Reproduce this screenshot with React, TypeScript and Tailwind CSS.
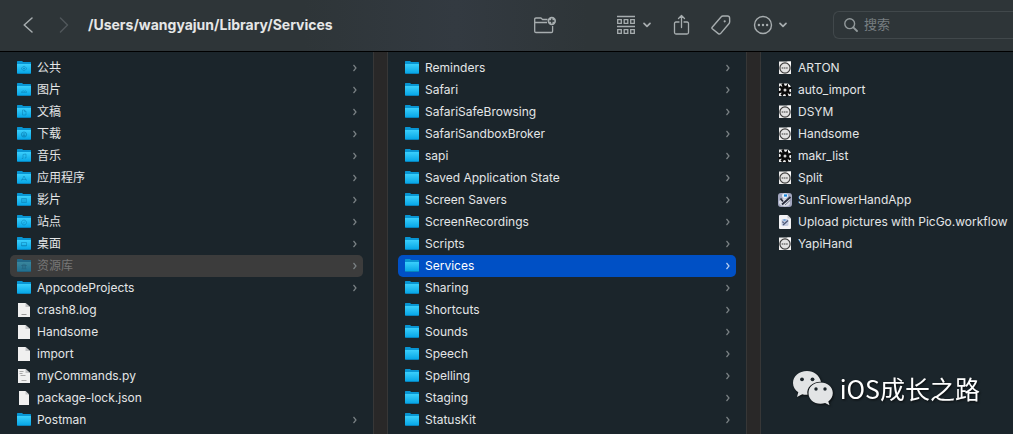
import React from "react";

type Kind =
  | "folder" | "public" | "pictures" | "documents" | "downloads" | "music" | "apps" | "movies" | "sites"
  | "desktop" | "library" | "file" | "log" | "script" | "json" | "service" | "gear" | "automator" | "workflow";

type Item = { name: string; kind: Kind };

const home: Item[] = [
  { name: "公共", kind: "public" },
  { name: "图片", kind: "pictures" },
  { name: "文稿", kind: "documents" },
  { name: "下载", kind: "downloads" },
  { name: "音乐", kind: "music" },
  { name: "应用程序", kind: "apps" },
  { name: "影片", kind: "movies" },
  { name: "站点", kind: "sites" },
  { name: "桌面", kind: "desktop" },
  { name: "资源库", kind: "library" },
  { name: "AppcodeProjects", kind: "folder" },
  { name: "crash8.log", kind: "log" },
  { name: "Handsome", kind: "file" },
  { name: "import", kind: "file" },
  { name: "myCommands.py", kind: "script" },
  { name: "package-lock.json", kind: "json" },
  { name: "Postman", kind: "folder" },
];

const library: Item[] = [
  "Reminders", "Safari", "SafariSafeBrowsing", "SafariSandboxBroker", "sapi", "Saved Application State",
  "Screen Savers", "ScreenRecordings", "Scripts", "Services", "Sharing", "Shortcuts", "Sounds", "Speech",
  "Spelling", "Staging", "StatusKit",
].map((name) => ({ name, kind: "folder" }));

const services: Item[] = [
  { name: "ARTON", kind: "service" },
  { name: "auto_import", kind: "gear" },
  { name: "DSYM", kind: "service" },
  { name: "Handsome", kind: "service" },
  { name: "makr_list", kind: "gear" },
  { name: "Split", kind: "service" },
  { name: "SunFlowerHandApp", kind: "automator" },
  { name: "Upload pictures with PicGo.workflow", kind: "workflow" },
  { name: "YapiHand", kind: "service" },
];

const leafKinds: Kind[] = ["file", "log", "script", "json", "service", "gear", "automator", "workflow"];

const glyphs: Partial<Record<Kind, React.ReactNode>> = {
  public: <path d="M8 6l3 2.500L8 11 5 8.500zM8 7.500v2M7 8.500h2" />,
  pictures: <path d="M5.500 9.800l1.700-1 1.300.6 1-.6 1 .8v.8h-5z" />,
  documents: <path d="M6.500 6h2l1.500 1.500V11H6.500zM8.500 6v1.500H10" />,
  downloads: <path d="M8 6a2.500 2.500 0 1 0 .01 0M8 7v3M7 9l1 1 1-1" strokeWidth="1.200" />,
  music: <path d="M7 10.500V6.500l3-.5v4M7 10.500H5.800M10 10H8.800" />,
  apps: <path d="M8 6l-2.500 4.800M8 6l2.500 4.800M5.500 9.500h5" />,
  movies: <path d="M5.500 6.500h5v4h-5zM7 6.500v4M9 6.500v4" />,
  sites: <path d="M8 6a2.500 2.500 0 1 0 .01 0M7 9.500l2-2" />,
  desktop: <path d="M5.500 6.500h5v3.500h-5zM5.500 9.500h5" />,
  library: <path d="M5.500 7.500L8 6l2.500 1.500zM6.500 7.500v3M8 7.500v3M9.500 7.500v3M5.500 10.800h5" />,
};

function FolderIcon({ kind }: { kind: Kind }) {
  return (
    <svg viewBox="0 0 16 16" className={kind === "library" ? "size-4 shrink-0 opacity-50" : "size-4 shrink-0"} aria-hidden="true">
      <defs>
        <linearGradient id="folderFront" x1="0" y1="0" x2="0" y2="1">
          <stop offset="0" stopColor="#3acffc" />
          <stop offset="1" stopColor="#06a5e6" />
        </linearGradient>
      </defs>
      <path d="M1 1.600Q1 1 1.600 1H6l1.200 1H14.400Q15 2 15 2.600V13H1z" fill="#0895d3" />
      <path d="M1 4h14V12.500q0 1-1 1H2q-1 0-1-1z" fill="url(#folderFront)" />
      <path d="M1 12.900h14q0 1.100-1 1.100H2q-1 0-1-1.100z" fill="#0784bd" />
      <g fill="none" stroke="#0878ad" strokeWidth="0.800" opacity="0.6">{glyphs[kind]}</g>
    </svg>
  );
}

function LeafIcon({ kind }: { kind: Kind }) {
  if (kind === "service") {
    return (
      <svg viewBox="0 0 16 16" className="size-4 shrink-0" aria-hidden="true">
        <path d="M2 1.500h12v12.500H2z" fill="#efefef" />
        <circle cx="8" cy="8" r="5.100" fill="#e2e2e2" stroke="#3c3c3c" strokeWidth="1.200" />
        <path d="M10 1.500h4V5.500z" fill="#ffffff" />
        <path d="M4.700 8h6.600" stroke="#8f8f8f" strokeWidth="2" strokeDasharray="1.600 .6" />
      </svg>
    );
  }
  if (kind === "gear") {
    return (
      <svg viewBox="0 0 16 16" className="size-4 shrink-0" aria-hidden="true">
        <path d="M2 1.500h8.500L14 5v9H2z" fill="#f0f0f0" />
        <g stroke="#0a0a0a" strokeWidth="2.400">
          <path d="M5.500 1.500l5 13M14.500 5.500l-13 5M2.500 4.500l11 7M11.500 2.500l-7 11" />
        </g>
        <circle cx="8" cy="8" r="4.300" fill="#0a0a0a" />
        <circle cx="8" cy="8" r="1.500" fill="#d0d0d0" />
        <path d="M11 1.500L14 4.500H11z" fill="#ffffff" />
      </svg>
    );
  }
  if (kind === "automator") {
    return (
      <svg viewBox="0 0 16 16" className="size-4 shrink-0" aria-hidden="true">
        <rect x="1" y="1" width="14" height="14" rx="3" fill="#a3a7c0" />
        <path d="M2 9l5-3 6 1v4q0 3-5 3.500Q3 14 2 11z" fill="#d9dce6" />
        <rect x="5" y="1.500" width="6" height="4.500" rx="2" fill="#e5edf8" />
        <path d="M7 3.500h3" stroke="#1686de" strokeWidth="2.200" />
        <path d="M3.500 6.500l2.500 3M5 12.500L13.500 5" stroke="#292d3c" strokeWidth="1.800" fill="none" />
        <path d="M8 13l5.500-5" stroke="#707588" strokeWidth="1" />
      </svg>
    );
  }
  if (kind === "workflow") {
    return (
      <svg viewBox="0 0 16 16" className="size-4 shrink-0" aria-hidden="true">
        <path d="M2 2q0-1 1-1h7.500L14 4.500V14q0 1-1 1H3q-1 0-1-1z" fill="#f2f2f5" />
        <path d="M10.500 1v3.500H14z" fill="#c9cad0" />
        <rect x="4.500" y="5" width="7" height="7" rx="1.500" fill="#c3cbe0" />
        <path d="M5.500 7.500l1 1.500M6 11l5-4.500" stroke="#4c5674" strokeWidth="1.300" fill="none" />
        <path d="M6.500 6h2" stroke="#4a97da" strokeWidth="1.300" />
      </svg>
    );
  }
  return (
    <svg viewBox="0 0 16 16" className="size-4 shrink-0" aria-hidden="true">
      <path d={kind === "json" ? "M3 1h6.500L13 4.500V15H3z" : "M2 1h7.500L14 5v10H2z"} fill="#f0f0f0" />
      <path d={kind === "json" ? "M9.500 1v3.500H13z" : "M9.500 1v4H14z"} fill="#c4c5c7" />
      {kind === "log" && <path d="M5.500 12.500h5" stroke="#999" strokeWidth="1" />}
      {kind === "script" && <path d="M3.500 3.500h4M3.500 5.500h3M4.500 7.500h5M5.500 12.500h5" stroke="#aaa" strokeWidth="1" />}
    </svg>
  );
}

function Row({ item, state }: { item: Item; state?: "active" | "trail" }) {
  const leaf = leafKinds.includes(item.kind);
  const tone =
    state === "active" ? "bg-[#0050c5] text-white" : state === "trail" ? "bg-[#3c3c3c] text-[#777777]" : "text-[#e4e6e7]";
  const arrow = state === "active" ? "text-[#b8cff0]" : "text-[#7b8285]";
  return (
    <li>
      <button type="button" className={`flex h-[22px] w-full items-center rounded-[5px] pr-[5px] pl-1.5 text-left text-[12px] ${tone}`}>
        {leaf ? <LeafIcon kind={item.kind} /> : <FolderIcon kind={item.kind} />}
        <span className="ml-[5px] flex-1 whitespace-nowrap">{item.name}</span>
        {!leaf && (
          <svg viewBox="0 0 6 8" className={`h-2 w-1.5 shrink-0 ${arrow}`} fill="none" stroke="currentColor" strokeWidth="1.200" aria-hidden="true">
            <path d="M1.500 1l2.500 3-2.500 3" />
          </svg>
        )}
      </button>
    </li>
  );
}

function Column({ items, label, selected, state }: { items: Item[]; label: string; selected?: string; state?: "active" | "trail" }) {
  return (
    <ul aria-label={label} className="min-w-0 px-2.5 pt-[5px] pb-[3px]">
      {items.map((item) => (
        <Row key={item.name} item={item} state={item.name === selected ? state : undefined} />
      ))}
    </ul>
  );
}

function Divider() {
  return <div className="border-x border-[#373737] bg-[#292828]" />;
}

function DownArrow() {
  return (
    <svg viewBox="0 0 8 6" className="h-1.5 w-2" fill="none" stroke="currentColor" strokeWidth="1.700" strokeLinecap="round" strokeLinejoin="round" aria-hidden="true">
      <path d="M1 1.300l3 3 3-3" />
    </svg>
  );
}

function Toolbar() {
  return (
    <header className="flex h-[52px] items-center border-b border-black bg-[#2e3538] bg-[linear-gradient(90deg,#2e3538_30%,#333a41_45%,#2e3538_58%)] pb-0.5 text-[#a7adaf]">
      <button type="button" aria-label="Back" className="ml-5 flex h-7 w-4 items-center justify-center">
        <svg viewBox="0 0 10 16" className="h-4 w-2.5" fill="none" stroke="currentColor" strokeWidth="1.500" strokeLinecap="round" strokeLinejoin="round"><path d="M9 1L1.200 8 9 15" /></svg>
      </button>
      <button type="button" aria-label="Forward" className="ml-5 flex h-7 w-4 items-center justify-center text-[#50575a]">
        <svg viewBox="0 0 10 16" className="h-4 w-2.5" fill="none" stroke="currentColor" strokeWidth="1.500" strokeLinecap="round" strokeLinejoin="round"><path d="M1.500 1l7 7-7 7" /></svg>
      </button>
      <h1 className="ml-4 min-w-0 flex-1 whitespace-nowrap text-[14px] leading-5 font-bold text-[#e6e7e7]">/Users/wangyajun/Library/Services</h1>
      <button type="button" aria-label="New folder">
        <svg viewBox="0 0 24 20" className="h-5 w-6" fill="none" stroke="currentColor" strokeWidth="1.300" strokeLinejoin="round">
          <path d="M14.500 4.500H9.500L8 3H3Q1.700 3 1.700 4.300V16.200Q1.700 17.500 3 17.500H18.300Q19.600 17.500 19.600 16.200V11M1.700 7.500H14" />
          <circle cx="18.800" cy="6" r="4.200" fill="currentColor" stroke="none" />
          <path d="M18.800 3.500v5M16.300 6h5" stroke="#2e3538" />
        </svg>
      </button>
      <button type="button" aria-label="Group items" className="ml-[60px] flex items-center gap-2">
        <svg viewBox="0 0 18 20" className="h-5 w-[18px]" fill="none" stroke="currentColor" strokeWidth="1.300">
          <path d="M0 1.500h18M0 11.500h18" />
          <path d="M.7 4.700h3.600v3.600H.7zM7.200 4.700h3.600v3.600H7.200zM13.700 4.700h3.600v3.600h-3.600zM.7 14.700h3.600v3.600H.7zM7.200 14.700h3.600v3.600H7.200zM13.700 14.700h3.600v3.600h-3.600z" />
        </svg>
        <DownArrow />
      </button>
      <button type="button" aria-label="Share" className="ml-[22px]">
        <svg viewBox="0 0 18 22" className="h-[22px] w-[18px]" fill="none" stroke="currentColor" strokeWidth="1.300" strokeLinecap="round" strokeLinejoin="round">
          <path d="M6 8H3Q1.500 8 1.500 9.500V18.500Q1.500 20 3 20H14Q15.500 20 15.500 18.500V9.500Q15.500 8 14 8H11M8.500 13.500V1.500M5.500 4.500l3-3 3 3" />
        </svg>
      </button>
      <button type="button" aria-label="Tags" className="ml-5">
        <svg viewBox="0 0 20 20" className="size-5" fill="none" stroke="currentColor" strokeWidth="1.400" strokeLinejoin="round">
          <path d="M1.200 12.200L10 2Q10.800 1 12 1H16.500Q18.500 1 18.600 3L18.700 6.500Q18.700 8 17.700 9L9.500 18.600Q8.500 19.600 7.300 18.600L1.300 13.700Q.6 13 1.200 12.200z" />
          <circle cx="13.700" cy="6.300" r="1.100" fill="currentColor" stroke="none" />
        </svg>
      </button>
      <button type="button" aria-label="More" className="ml-[22px] flex items-center gap-1.5">
        <svg viewBox="0 0 20 20" className="size-5" fill="none" stroke="currentColor" strokeWidth="1.400">
          <circle cx="10" cy="10" r="8.500" />
          <g fill="currentColor" stroke="none"><circle cx="5.900" cy="10" r="1.200" /><circle cx="10" cy="10" r="1.200" /><circle cx="14.100" cy="10" r="1.200" /></g>
        </svg>
        <DownArrow />
      </button>
      <label className="ml-[46px] flex h-7 w-[180px] items-center gap-1.5 rounded-l-md border border-r-0 border-[#41484b] pl-2.5">
        <svg viewBox="0 0 14 14" className="size-3.5 shrink-0 text-[#92999b]" fill="none" stroke="currentColor" strokeWidth="1.400" strokeLinecap="round" aria-hidden="true">
          <circle cx="5.700" cy="5.700" r="4.900" /><path d="M9.300 9.300l3.700 3.700" strokeWidth="1.800" />
        </svg>
        <input type="search" aria-label="搜索" placeholder="搜索" className="w-full min-w-0 bg-transparent text-[13px] outline-none placeholder:text-[#777e81]" />
      </label>
    </header>
  );
}

function Watermark() {
  return (
    <div className="absolute right-[33px] bottom-7 flex items-center gap-1.5 [filter:drop-shadow(1px_1px_1px_rgba(0,0,0,0.7))]">
      <svg viewBox="0 0 42 36" className="h-9 w-[42px]" aria-hidden="true">
        <path d="M15 1C7 1 1 6.300 1 13c0 3.900 2 7.200 5.300 9.300L5 27l5.200-2.800c1.500.4 3.200.7 5.300.6C14 17 21 11.500 29 11.700 27.500 5.500 22 1 15 1z" fill="#e2e4e5" />
        <path d="M28.500 12.500C21.500 12.500 16.500 17 16.500 23s5 10.800 12 10.800c1.700 0 3.200-.3 4.600-.7l4.400 2.200-1.200-3.800c2.800-2 4.500-5 4.500-8.500 0-6-5.300-10.500-12.300-10.500z" fill="#e2e4e5" />
        <g fill="#1c252a"><circle cx="10" cy="9.300" r="1.900" /><circle cx="20.500" cy="9.300" r="1.900" /><circle cx="24" cy="19" r="1.700" /><circle cx="33" cy="19" r="1.700" /></g>
      </svg>
      <span className="font-['Noto_Sans_CJK_SC',sans-serif] text-[25px] leading-9 text-white">iOS成长之路</span>
    </div>
  );
}

export default function App() {
  return (
    <div className="relative flex min-h-screen flex-col overflow-hidden bg-[#1b252b] font-['Inter','Noto_Sans_CJK_SC',sans-serif]">
      <Toolbar />
      <main className="grid flex-1 grid-cols-[373fr_15px_358fr_15px_252fr]">
        <Column items={home} label="wangyajun" selected="资源库" state="trail" />
        <Divider />
        <Column items={library} label="Library" selected="Services" state="active" />
        <Divider />
        <Column items={services} label="Services" />
      </main>
      <Watermark />
    </div>
  );
}
